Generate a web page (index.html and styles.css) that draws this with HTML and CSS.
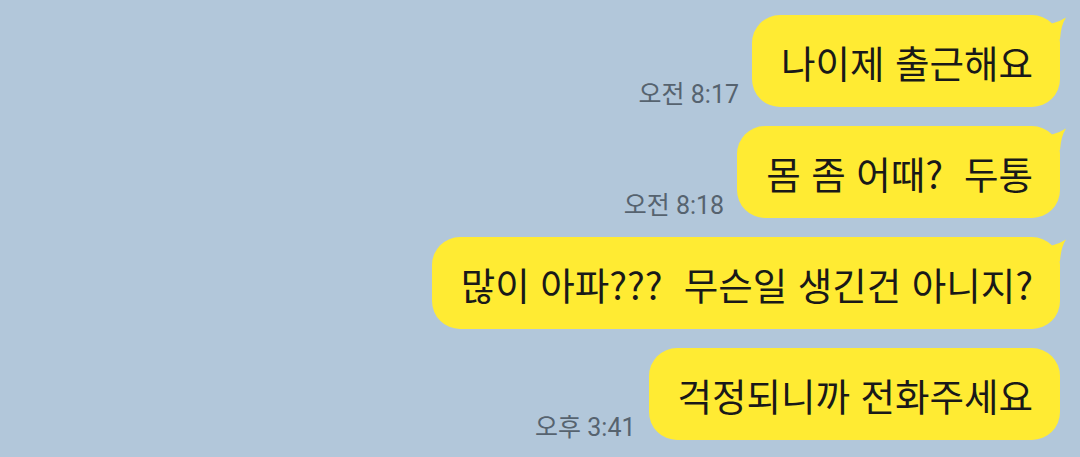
FILE: index.html
```html
<!DOCTYPE html>
<html lang="ko">
<head>
<meta charset="utf-8">
<link rel="stylesheet" href="styles.css">
</head>
<body>
<main class="chat">
  <div class="row">
    <span class="time">오전 8:17</span>
    <div class="bubble">나이제 출근해요<svg class="tail" viewBox="0 0 22 24" width="22" height="24"><path d="M6 11 L8 8.5 Q15 7 22 2.5 Q17 10 16 24 L6 24 Z"/></svg></div>
  </div>
  <div class="row">
    <span class="time">오전 8:18</span>
    <div class="bubble">몸 좀 어때?  두통<svg class="tail" viewBox="0 0 22 24" width="22" height="24"><path d="M6 11 L8 8.5 Q15 7 22 2.5 Q17 10 16 24 L6 24 Z"/></svg></div>
  </div>
  <div class="row">
    <div class="bubble">많이 아파???  무슨일 생긴건 아니지?<svg class="tail" viewBox="0 0 22 24" width="22" height="24"><path d="M6 11 L8 8.5 Q15 7 22 2.5 Q17 10 16 24 L6 24 Z"/></svg></div>
  </div>
  <div class="row">
    <span class="time">오후 3:41</span>
    <div class="bubble">걱정되니까 전화주세요</div>
  </div>
</main>
</body>
</html>
```
FILE: styles.css
```css
html, body {
  margin: 0;
  padding: 0;
}
body {
  background: #b2c7da;
  width: 1080px;
  height: 457px;
  overflow: hidden;
}
.chat {
  display: flex;
  flex-direction: column;
  align-items: flex-end;
  gap: 19px;
  padding: 15px 20px 0 0;
}
.row {
  display: flex;
  align-items: flex-end;
  gap: 13px;
}
.time {
  font-family: Roboto, "Noto Sans CJK KR", sans-serif;
  font-size: 25px;
  line-height: 25px;
  color: #56636f;
  margin-bottom: 0;
  white-space: nowrap;
}
.bubble {
  position: relative;
  display: flex;
  align-items: center;
  height: 92px;
  box-sizing: border-box;
  padding: 0 27px 0 29px;
  border-radius: 28px;
  background: #ffeb33;
  color: #191919;
  font-family: "Noto Sans CJK KR", sans-serif;
  font-size: 37.5px;
  white-space: pre;
}
.tail {
  position: absolute;
  top: 0;
  right: -6px;
  fill: #ffeb33;
}
```
